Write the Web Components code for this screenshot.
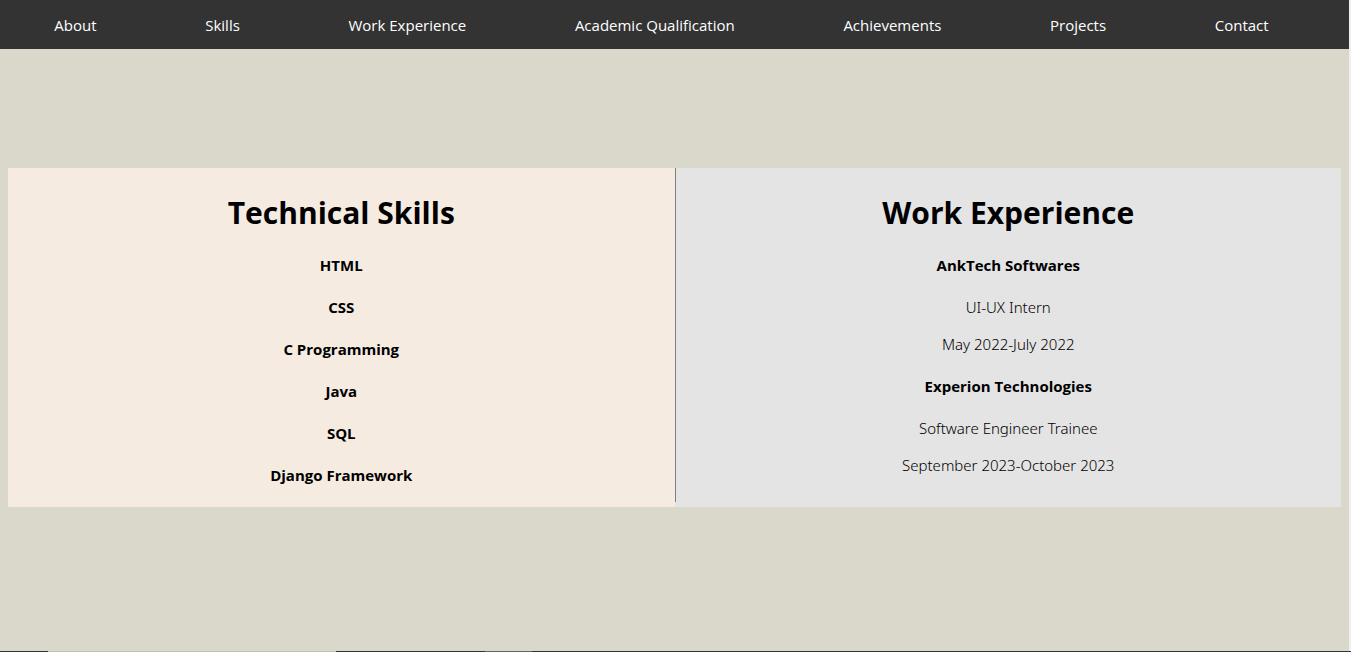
<!DOCTYPE html>
<html lang="en">
<head>
<meta charset="utf-8">
<meta name="viewport" content="width=device-width, initial-scale=1">
<title>Portfolio</title>
<style>
  html { background: #f0f0f0; }
  body { margin: 0; }
</style>
</head>
<body>
<portfolio-page>
  <site-nav slot="nav">
    <nav-link href="#about">About</nav-link>
    <nav-link href="#skills">Skills</nav-link>
    <nav-link href="#experience">Work Experience</nav-link>
    <nav-link href="#academics">Academic Qualification</nav-link>
    <nav-link href="#achievements">Achievements</nav-link>
    <nav-link href="#projects">Projects</nav-link>
    <nav-link href="#contact">Contact</nav-link>
  </site-nav>
  <info-panel id="skills" heading="Technical Skills">
    <panel-entry heading="HTML"></panel-entry>
    <panel-entry heading="CSS"></panel-entry>
    <panel-entry heading="C Programming"></panel-entry>
    <panel-entry heading="Java"></panel-entry>
    <panel-entry heading="SQL"></panel-entry>
    <panel-entry heading="Django Framework"></panel-entry>
  </info-panel>
  <info-panel id="experience" heading="Work Experience" divided>
    <panel-entry heading="AnkTech Softwares" role-name="UI-UX Intern" period="May 2022-July 2022"></panel-entry>
    <panel-entry heading="Experion Technologies" role-name="Software Engineer Trainee" period="September 2023-October 2023"></panel-entry>
  </info-panel>
</portfolio-page>

<script>
  class PortfolioPage extends HTMLElement {
    constructor() {
      super();
      this.attachShadow({ mode: "open" }).innerHTML = `
        <style>
          :host {
            display: flex; flex-direction: column; box-sizing: border-box;
            min-height: 100vh;
            font: 16px/21px "Open Sans", "Segoe UI", sans-serif; color: #000;
          }
          .page { flex: 1; margin-right: 2px; background: #dad8cb; }
          main {
            display: grid; grid-template-columns: 1fr 1fr;
            padding: 119px 8px;
          }
          .edge {
            height: 1px;
            background: linear-gradient(to right,
              #333 48px, #bfc0b6 48px 336px, #333 336px 485px, #62645f 485px 532px, #333 532px);
          }
        </style>
        <div class="page">
          <slot name="nav"></slot>
          <main><slot></slot></main>
        </div>
        <div class="edge"></div>`;
    }
  }

  class SiteNav extends HTMLElement {
    constructor() {
      super();
      this.attachShadow({ mode: "open" }).innerHTML = `
        <style>
          :host { display: block; background: #333; color: #fff; }
          nav {
            display: flex; flex-wrap: wrap; justify-content: space-around;
            padding: 15px 26px 13px 0;
          }
        </style>
        <nav aria-label="Main"><slot></slot></nav>`;
    }
  }

  class NavLink extends HTMLElement {
    constructor() {
      super();
      this.attachShadow({ mode: "open" }).innerHTML = `
        <style>
          :host { display: block; }
          a { color: inherit; text-decoration: none; font-size: 15px; }
          a:hover { text-decoration: underline; }
        </style>
        <a><slot></slot></a>`;
    }
    connectedCallback() {
      this.shadowRoot.querySelector("a").href = this.getAttribute("href");
    }
  }

  class InfoPanel extends HTMLElement {
    constructor() {
      super();
      this.attachShadow({ mode: "open" }).innerHTML = `
        <style>
          :host {
            display: flex; flex-direction: column; box-sizing: border-box;
            padding-bottom: 5px; text-align: center; background: #f5ebe0;
          }
          :host([divided]) { background: #e4e4e4; }
          section { flex: 1; padding: 23px 0 16px; }
          :host([divided]) section { border-left: 1px solid #808080; }
          h1 { margin: 0 0 20px; font-size: 30px; line-height: 44px; font-weight: 700; }
          .entries { display: grid; gap: 21px; }
        </style>
        <section>
          <h1></h1>
          <div class="entries"><slot></slot></div>
        </section>`;
    }
    connectedCallback() {
      this.shadowRoot.querySelector("h1").textContent = this.getAttribute("heading");
    }
  }

  class PanelEntry extends HTMLElement {
    constructor() {
      super();
      this.attachShadow({ mode: "open" }).innerHTML = `
        <style>
          :host { display: block; font-size: 15px; }
          h4 { margin: 0; font-size: 15px; font-weight: 700; }
          p { margin: 16px 0 0; font-family: "Noto Sans", "Segoe UI", sans-serif; font-weight: 350; }
          h4 + p { margin-top: 21px; }
        </style>
        <h4></h4>`;
    }
    connectedCallback() {
      this.shadowRoot.querySelector("h4").textContent = this.getAttribute("heading");
      for (const name of ["role-name", "period"]) {
        if (!this.hasAttribute(name)) continue;
        const line = document.createElement("p");
        line.textContent = this.getAttribute(name);
        this.shadowRoot.append(line);
      }
    }
  }

  customElements.define("portfolio-page", PortfolioPage);
  customElements.define("site-nav", SiteNav);
  customElements.define("nav-link", NavLink);
  customElements.define("info-panel", InfoPanel);
  customElements.define("panel-entry", PanelEntry);
</script>
</body>
</html>
